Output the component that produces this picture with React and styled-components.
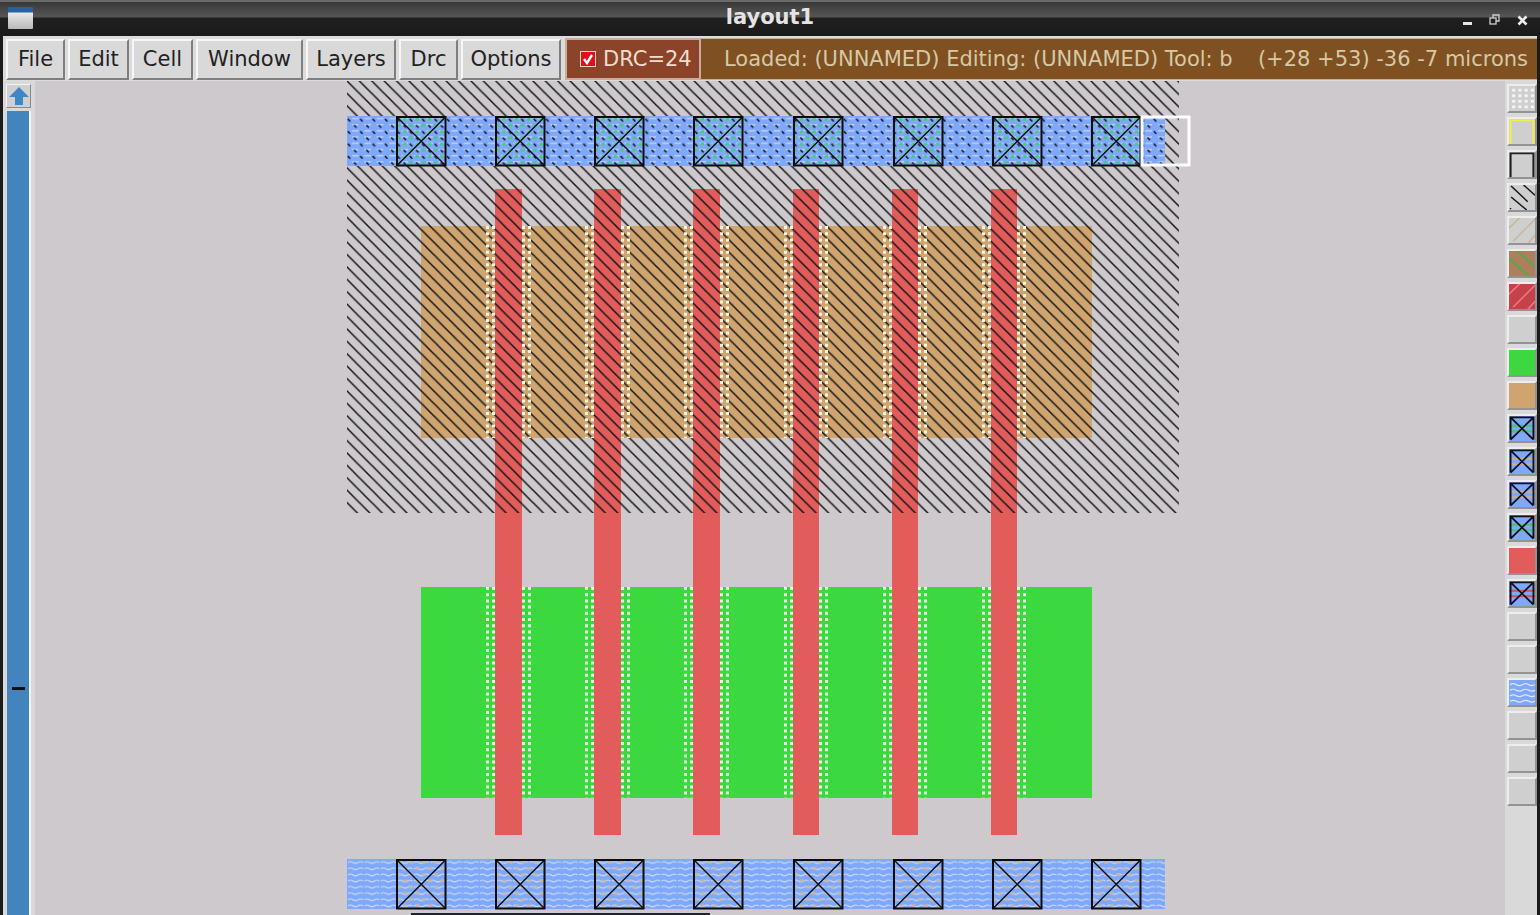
import React from "react";
import styled, { createGlobalStyle } from "styled-components";

const Global = createGlobalStyle`
  html, body { margin: 0; padding: 0; background: #1b1b1b; overflow: hidden; }
  #root { width: 1540px; height: 915px; }
`;

const Window = styled.div`
  width: 1540px; height: 915px; display: flex; flex-direction: column; overflow: hidden;
  font-family: "DejaVu Sans", sans-serif; background: #d9d9d9;
`;
const TitleBar = styled.div`
  height: 36px; flex: none; display: flex; align-items: center; justify-content: space-between;
  padding: 0 12px 0 8px; box-sizing: border-box;
  border-top: 2px solid #6a6a6a;
  background: linear-gradient(#383838 0, #565656 15px, #202020 16px, #1a1a1a 100%);
`;
const AppIcon = styled.div`
  width: 25px; height: 22px; border-radius: 1px; margin-top: -2px;
  background: linear-gradient(#27619f 0 5px, #e8e8e8 6px, #b9b9b9 100%);
`;
const Title = styled.div`
  font-size: 21px; font-weight: 700; color: #e4e4e4;
  position: absolute; left: 0; right: 0; top: 5px; text-align: center;
`;
const WinControls = styled.div`display: flex; align-items: center; gap: 15px; margin-top: 2px;`;
const MenuRow = styled.div`
  height: 45px; flex: none; display: flex; align-items: stretch; box-sizing: border-box;
  border-left: 3px solid #1b1b1b; border-right: 3px solid #1b1b1b;
  background: #dcdcdc; padding: 2px 0 1px 1px;
`;
const MenuButton = styled.div`
  width: ${(p) => p.$w}px; margin: 1px 1px 0 2px; box-sizing: border-box;
  display: flex; align-items: center; justify-content: center; padding: 0 0 2px 0;
  font-size: 21px; color: #222; background: #d9d9d9;
  border: 2px solid; border-color: #f6f6f6 #7f7f7f #7f7f7f #f6f6f6;
`;
const DrcBox = styled.div`
  width: 136px; margin-left: 3px; box-sizing: border-box; display: flex; align-items: center;
  padding-left: 13px; gap: 7px; font-size: 21px; color: #f2dccb; background: #8b4429;
  border: 2px solid #c9aca0;
`;
const CheckBox = styled.div`
  width: 16px; height: 16px; background: #e0101a; border: 1px solid #f0d0c8; box-sizing: border-box;
  display: flex; align-items: center; justify-content: center;
`;
const StatusBar = styled.div`
  flex: 1; display: flex; align-items: center; justify-content: space-between;
  padding: 0 9px 0 23px; font-size: 21px; color: #d6c9a3; background: #7f5022;
  border-top: 1px solid #c9b08f; border-bottom: 1px solid #c9b08f; white-space: nowrap;
`;
const Body = styled.div`
  flex: 1; min-height: 0; display: flex; border-left: 3px solid #1b1b1b; border-right: 3px solid #1b1b1b;
`;
const ScrollColumn = styled.div`
  width: 32px; flex: none; display: flex; flex-direction: column; gap: 3px; box-sizing: border-box;
  padding: 3px 4px 0 3px; background: #d9d9d9;
`;
const ArrowButton = styled.div`
  height: 24px; box-sizing: border-box; display: flex; align-items: center; justify-content: center;
  background: #d0d0d0; border: 1px solid; border-color: #f4f4f4 #8a8a8a #8a8a8a #f4f4f4;
`;
const Trough = styled.div`
  flex: 1; position: relative; background: #4484bd; margin-left: 1px; border-right: 2px solid #f4f4f4;
`;
const Thumb = styled.div`
  position: absolute; left: 5px; top: 576px; width: 13px; height: 3px; background: #111;
`;
const Canvas = styled.svg`
  flex: 1; min-width: 0; height: 100%; display: block; background: #cdc9cd;
`;
const LayerColumn = styled.div`
  width: 32px; flex: none; box-sizing: border-box; display: flex; flex-direction: column; gap: 4px;
  padding: 3px 0 0 2px; background: #d9d9d9;
`;
const LayerButton = styled.div`
  width: 30px; height: 29px; box-sizing: border-box; display: flex; background: #cfcfcf;
  border: 2px solid; border-color: #ededed #939393 #939393 #ededed;
`;
const Swatch = styled.svg`width: 26px; height: 25px; display: block;`;

const menus = [["File", 59], ["Edit", 61], ["Cell", 61], ["Window", 107], ["Layers", 90], ["Drc", 59], ["Options", 100]];
const contactX = [396, 495, 594, 693, 793, 893, 992, 1091];
const gates = [[495, 27], [594, 27], [693, 27], [793, 26], [892, 26], [991, 26]];
const BLUE = "#7fa8fb";

function ContactBox({ x, y }) {
  return (
    <g fill="none" stroke="#0c0c0c" strokeWidth="2">
      <rect x={x + 1} y={y + 1} width="48.5" height="48.5" />
      <path d={`M${x + 1} ${y + 1}L${x + 49.5} ${y + 49.5}M${x + 49.5} ${y + 1}L${x + 1} ${y + 49.5}`} strokeWidth="1.4" />
    </g>
  );
}

function DotColumns({ gate, width, y, height, color }) {
  const xs = [gate - 7.5, gate - 1.5, gate + width + 1.5, gate + width + 7.5];
  return (
    <g stroke={color} strokeWidth="3" strokeDasharray="3 3.2" fill="none">
      {xs.map((x) => <path key={x} d={`M${x} ${y}V${y + height}`} />)}
    </g>
  );
}

function Layout() {
  return (
    <Canvas viewBox="35 81 1470 834" preserveAspectRatio="none">
      <defs>
        <pattern id="hatch" patternUnits="userSpaceOnUse" x="347" y="81" width="12.4" height="12.4">
          <path d="M-2 -2L14.4 14.4M-2 10.4L2 14.4M10.4 -2L14.4 2" stroke="#141414" strokeWidth="1.5" fill="none" />
        </pattern>
        <pattern id="wave" patternUnits="userSpaceOnUse" x="347" y="859" width="16.5" height="6.2">
          <path d="M1 3.5q2.5 -1.6 5 0t5 0t5 0" stroke="#d2dffb" strokeWidth="1" fill="none" />
        </pattern>
        <pattern id="paleDash" patternUnits="userSpaceOnUse" x="347" y="116" width="12.4" height="6.2">
          <path d="M5 2.5h6.5" stroke="#d2dffb" strokeWidth="1" />
        </pattern>
        <pattern id="blackDash" patternUnits="userSpaceOnUse" x="347" y="116" width="12.4" height="12.4">
          <path d="M0.8 3l2.5 2.5M7 9.2l2.5 2.5" stroke="#141414" strokeWidth="1.5" />
        </pattern>
        <pattern id="greenSpot" patternUnits="userSpaceOnUse" x="396" y="116" width="12.4" height="12.4">
          <rect x="7" y="2" width="3.5" height="2.6" fill="#3ed06a" />
          <rect x="0.8" y="8.2" width="3.5" height="2.6" fill="#3ed06a" />
        </pattern>
        <pattern id="tanSpot" patternUnits="userSpaceOnUse" x="396" y="859" width="12.4" height="12.4">
          <rect x="1" y="2" width="4" height="2.6" fill="#c9b79c" />
          <rect x="7.2" y="8.2" width="4" height="2.6" fill="#c9b79c" />
        </pattern>
      </defs>

      <rect x="421" y="226" width="671" height="212" fill="#cfa46f" />
      <rect x="421" y="587" width="671" height="211" fill="#3bd83f" />
      {gates.map(([x, w]) => (
        <g key={x}>
          <DotColumns gate={x} width={w} y={587} height={211} color="#e4fae0" />
          <rect x={x} y="189" width={w} height="646" fill="#e25c5c" />
        </g>
      ))}
      <rect x="347" y="81" width="832" height="432" fill="url(#hatch)" />
      {gates.map(([x, w]) => (
        <DotColumns key={x} gate={x} width={w} y={226} height={212} color="#fff6e2" />
      ))}

      <rect x="347" y="116" width="818" height="50" fill={BLUE} />
      <rect x="347" y="116" width="818" height="50" fill="url(#paleDash)" />
      {contactX.map((x) => <rect key={x} x={x} y="116" width="50" height="50" fill="url(#greenSpot)" />)}
      <rect x="347" y="116" width="818" height="50" fill="url(#blackDash)" />
      {contactX.map((x) => <ContactBox key={x} x={x} y={116} />)}
      <rect x="1142" y="117" width="47" height="48" fill="none" stroke="#fff" strokeWidth="3" />

      <rect x="347" y="859" width="818" height="50" fill={BLUE} />
      <rect x="347" y="859" width="818" height="50" fill="url(#wave)" />
      {contactX.map((x) => <rect key={x} x={x} y="859" width="50" height="50" fill="url(#tanSpot)" />)}
      {contactX.map((x) => <ContactBox key={x} x={x} y={859} />)}
      <rect x="411" y="913" width="299" height="2" fill="#23232b" />
    </Canvas>
  );
}

const X = ({ color = "#111" }) => (
  <path d="M1.5 1.5L23.5 25.5M23.5 1.5L1.5 25.5M1.5 25.5V1.5H23.5V25.5" fill="none" stroke={color} strokeWidth="1.8" />
);
const Stripes = ({ color, width = 1.5 }) => (
  <path d="M-4 15L12 -2M4 25L28 -2M16 30L32 10" stroke={color} strokeWidth={width} fill="none" />
);
const Contact = ({ band, boxColor }) => (
  <>
    <rect width="25" height="27" fill="#7fa8fb" />
    <path d="M0 10.5H25M0 16.5H25" stroke={band} strokeWidth="2" />
    <X color={boxColor} />
  </>
);

const swatches = {
  dots: (
    <g fill="#f4f4f4">
      {[3, 9, 15, 21].map((y) => [3, 9, 15, 21].map((x) => <rect key={`${x}-${y}`} x={x} y={y} width="3" height="3" />))}
    </g>
  ),
  yellow: <path d="M1.5 27V1.5H23.5V27" fill="none" stroke="#f0ee4e" strokeWidth="2" />,
  black: <path d="M1.5 27V1.5H23.5V27" fill="none" stroke="#202020" strokeWidth="2" />,
  hatch: <path d="M2 1L18 18M14 0L25 11M2 13L17 27M1 25L2 26" stroke="#1a1a1a" strokeWidth="1.5" fill="none" />,
  pale: <Stripes color="#c8b49c" />,
  tanGreen: <><rect width="25" height="27" fill="#ad7f5c" /><path d="M-2 6L22 30M8 0L28 20" stroke="#58a84a" strokeWidth="2" fill="none" /></>,
  redHatch: <><rect width="25" height="27" fill="#c4434a" /><Stripes color="#e98080" /></>,
  green: <rect width="25" height="27" fill="#3bd83f" />,
  tan: <rect width="25" height="27" fill="#cfa46f" />,
  cGreen: <Contact band="#42c86a" boxColor="#0f0f0f" />,
  cTan: <Contact band="#c9b08c" boxColor="#14141c" />,
  red: <rect width="25" height="27" fill="#e25c5c" />,
  cRed: <Contact band="#d0505a" boxColor="#1a1016" />,
  blue: (
    <>
      <rect width="25" height="27" fill="#7fa8fb" />
      <path d="M1 5q3 -2 6 0t6 0t6 0t6 0M1 11q3 -2 6 0t6 0t6 0t6 0M1 17q3 -2 6 0t6 0t6 0t6 0M1 23q3 -2 6 0t6 0t6 0t6 0" stroke="#dce6fb" strokeWidth="1.3" fill="none" />
    </>
  ),
};
const layerKeys = ["dots", "yellow", "black", "hatch", "pale", "tanGreen", "redHatch", null, "green", "tan", "cGreen", "cTan", "cTan", "cGreen", "red", "cRed", null, null, "blue", null, null, null];

export default function App() {
  return (
    <Window>
      <Global />
      <TitleBar>
        <AppIcon />
        <Title>layout1</Title>
        <WinControls>
          <svg width="11" height="11" viewBox="0 0 11 11"><rect x="0" y="7" width="9" height="3" fill="#e6e6e6" /></svg>
          <svg width="13" height="12" viewBox="0 0 13 12" fill="none" stroke="#cfcfcf" strokeWidth="1.3"><rect x="1" y="4" width="6" height="6" /><path d="M4 4V1H10V7H7" /></svg>
          <svg width="11" height="11" viewBox="0 0 11 11"><path d="M1.5 1.5L9.5 9.5M9.5 1.5L1.5 9.5" stroke="#eeeeee" strokeWidth="2.6" /></svg>
        </WinControls>
      </TitleBar>
      <MenuRow>
        {menus.map(([m, w]) => <MenuButton key={m} $w={w}>{m}</MenuButton>)}
        <DrcBox>
          <CheckBox>
            <svg width="12" height="12" viewBox="0 0 12 12"><path d="M2 6L5 10L10 2" fill="none" stroke="#fff" strokeWidth="2.4" /></svg>
          </CheckBox>
          DRC=24
        </DrcBox>
        <StatusBar>
          <span>Loaded: (UNNAMED) Editing: (UNNAMED) Tool: b</span>
          <span>(+28 +53) -36 -7 microns</span>
        </StatusBar>
      </MenuRow>
      <Body>
        <ScrollColumn>
          <ArrowButton>
            <svg width="22" height="20" viewBox="0 0 22 20"><path d="M11 1L21 11H15V19H7V11H1Z" fill="#3f86c4" /></svg>
          </ArrowButton>
          <Trough><Thumb /></Trough>
        </ScrollColumn>
        <Layout />
        <LayerColumn>
          {layerKeys.map((k, i) => (
            <LayerButton key={i}>
              <Swatch viewBox="0 0 25 27" preserveAspectRatio="none">{k && swatches[k]}</Swatch>
            </LayerButton>
          ))}
        </LayerColumn>
      </Body>
    </Window>
  );
}
